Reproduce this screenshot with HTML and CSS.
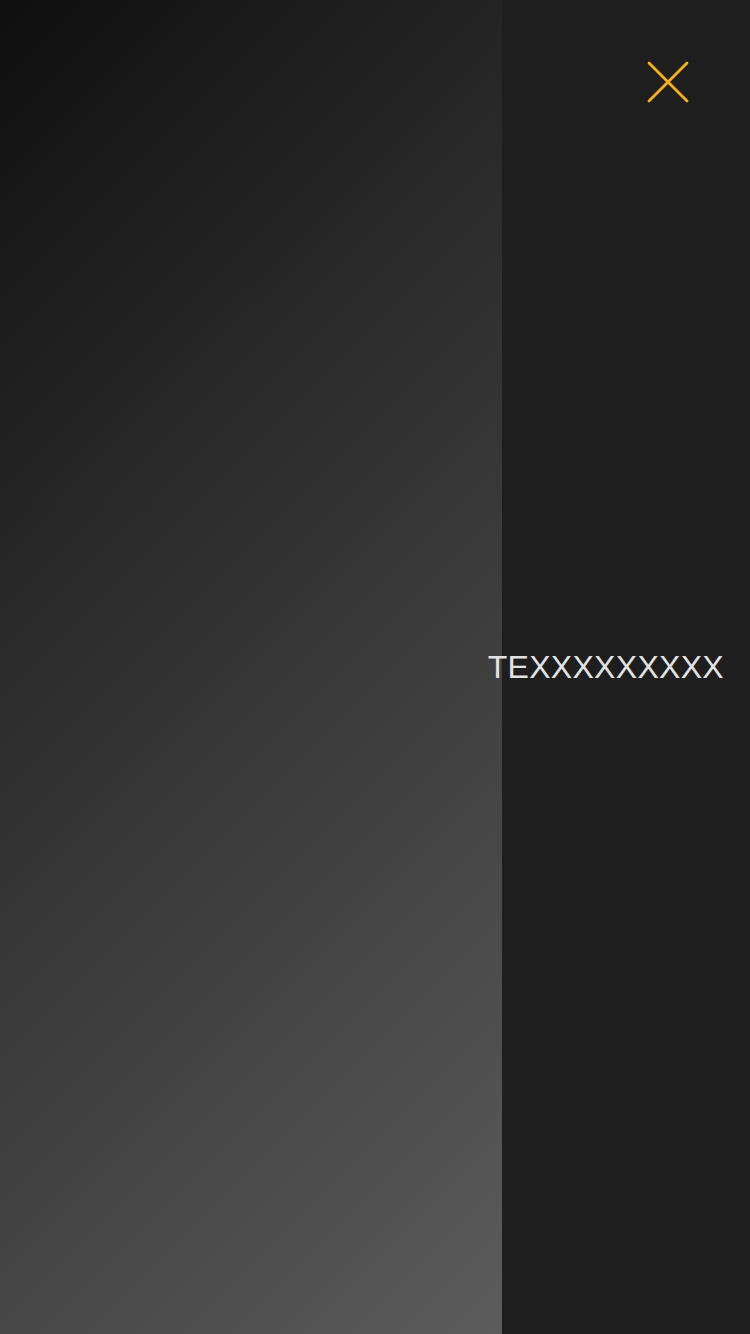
FILE: index.html
```html
<!DOCTYPE html>
<html>
<head>
<meta charset="utf-8">
<link rel="stylesheet" href="styles.css">
</head>
<body>
<div class="screen">
  <div class="backdrop"></div>
  <aside class="drawer">
    <div class="top">
      <button class="close" aria-label="Close">
        <svg width="42" height="42" viewBox="0 0 42 42">
          <path d="M2 2 L40 40 M40 2 L2 40" stroke="#fcb215" stroke-width="2.8" stroke-linecap="round" fill="none"/>
        </svg>
      </button>
    </div>
    <div class="label-row">
      <div class="label">TEXXXXXXXXX</div>
    </div>
  </aside>
</div>
</body>
</html>
```
FILE: styles.css
```css
html, body {
  margin: 0;
  padding: 0;
  background: #1e1e1e;
}
.screen {
  width: 750px;
  height: 1334px;
  display: flex;
  overflow: hidden;
  font-family: "Liberation Sans", Arial, sans-serif;
}
.backdrop {
  width: 502px;
  flex: none;
  background: linear-gradient(135deg, #0f0f0f 0%, #5c5c5c 100%);
}
.drawer {
  flex: 1;
  background: #1e1e1e;
  display: grid;
  grid-template: 1fr / 1fr;
  min-width: 0;
}
.top {
  grid-area: 1 / 1;
  align-self: start;
  display: flex;
  justify-content: flex-end;
  padding: 61px 61px 0 0;
}
.close {
  padding: 0;
  border: 0;
  background: none;
  width: 42px;
  height: 42px;
  display: flex;
}
.label-row {
  grid-area: 1 / 1;
  align-self: center;
  display: flex;
  justify-content: flex-end;
  padding-right: 26px;
  min-width: 0;
}
.label {
  flex: none;
  color: #e2e2e2;
  font-size: 32px;
  white-space: nowrap;
  line-height: 1;
  letter-spacing: 0.3px;
}
```
